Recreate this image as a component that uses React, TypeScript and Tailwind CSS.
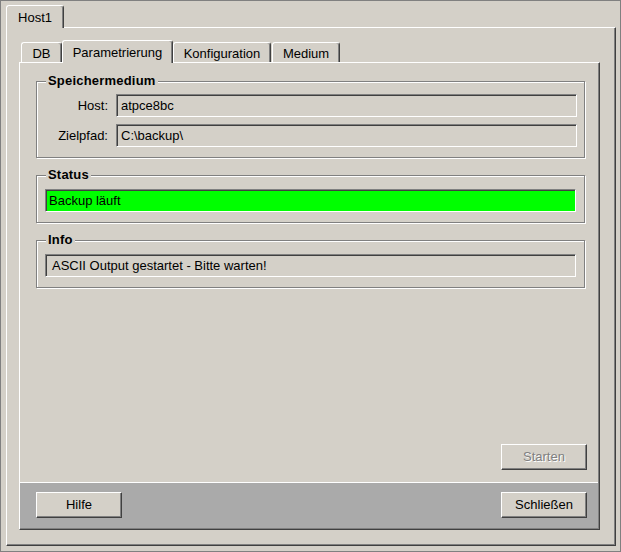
import React from 'react';

// Windows-classic style 3D edges
const raised =
  'border border-t-white border-l-white border-r-[#404040] border-b-[#404040] shadow-[inset_-1px_-1px_0_#808080]';
const sunken =
  'border border-t-[#808080] border-l-[#808080] border-r-white border-b-white shadow-[inset_1px_1px_0_#404040]';

interface TabProps {
  label: string;
  width: string;
  selected?: boolean;
}

const Tab: React.FC<TabProps> = ({ label, width, selected }) => (
  <div
    className={`${width} ${
      selected ? 'relative z-10 -mb-px h-[23px] pt-[4px]' : 'h-[20px] pt-[3px]'
    } bg-[#d4d0c8] border-l border-t border-r border-l-white border-t-white border-r-[#404040] rounded-t-[3px] shadow-[inset_-1px_0_0_#808080] text-center whitespace-nowrap`}
  >
    {label}
  </div>
);

const Group: React.FC<{ title: string; className: string; children: React.ReactNode }> = ({
  title,
  className,
  children,
}) => (
  <div
    className={`relative ml-[16px] w-[549px] border border-[#808080] shadow-[inset_1px_1px_0_#fff,1px_1px_0_#fff] ${className}`}
  >
    <span className="absolute -top-[9px] left-[9px] px-[2px] bg-[#d4d0c8] font-bold tracking-[0.2px]">
      {title}
    </span>
    {children}
  </div>
);

const Field: React.FC<{ label: string; value: string }> = ({ label, value }) => (
  <div className="flex items-center">
    <span className="w-[71px] mr-[8px] text-right">{label}</span>
    <div className={`w-[461px] h-[23px] ${sunken} bg-[#d4d0c8] pl-[4px] flex items-center`}>{value}</div>
  </div>
);

const Button: React.FC<{ label: string; disabled?: boolean }> = ({ label, disabled }) => (
  <button
    disabled={disabled}
    className={`w-[86px] h-[26px] ${raised} bg-[#d4d0c8] pb-[2px] flex items-center justify-center ${
      disabled ? 'text-[#808080] [text-shadow:1px_1px_0_#fff]' : 'text-black'
    }`}
  >
    {label}
  </button>
);

const App: React.FC = () => {
  return (
    <div className="w-[621px] h-[552px] bg-[#d4d0c8] border border-[#808080] font-['Liberation_Sans',Arial,sans-serif] text-[13px] leading-[15px] text-black pt-[4px] pl-[5px] pr-[4px] pb-[5px] flex flex-col">
      {/* Host tabs */}
      <div className="flex items-end h-[22px]">
        <Tab label="Host1" width="w-[58px]" selected />
      </div>

      <div className={`flex-1 flex flex-col ${raised} pt-[12px] pl-[12px] pr-[15px] pb-[15px]`}>
        {/* Inner tabs */}
        <div className="flex items-end h-[22px]">
          <div className="ml-[2px]">
            <Tab label="DB" width="w-[41px]" />
          </div>
          <Tab label="Parametrierung" width="w-[111px]" selected />
          <Tab label="Konfiguration" width="w-[98px]" />
          <div className="ml-[1px]">
            <Tab label="Medium" width="w-[68px]" />
          </div>
        </div>

        <div className={`flex-1 flex flex-col ${raised} pr-px pb-px`}>
          <Group title="Speichermedium" className="mt-[18px] h-[77px] pt-[12px] flex flex-col gap-[7px]">
            <Field label="Host:" value="atpce8bc" />
            <Field label="Zielpfad:" value="C:\backup\" />
          </Group>

          <Group title="Status" className="mt-[17px] h-[48px] pt-[13px]">
            <div className={`ml-[8px] w-[531px] h-[23px] ${sunken} bg-[#00ff00] pl-[3px] flex items-center`}>
              Backup läuft
            </div>
          </Group>

          <Group title="Info" className="mt-[17px] h-[48px] pt-[13px]">
            <div className={`ml-[8px] w-[531px] h-[23px] ${sunken} bg-[#d4d0c8] pl-[6px] flex items-center`}>
              ASCII Output gestartet - Bitte warten!
            </div>
          </Group>

          <div className="flex-1" />

          <div className="flex justify-end pr-[11px] mb-[12px]">
            <Button label="Starten" disabled />
          </div>

          <div className="h-[46px] border-t border-t-white bg-[#aaaaaa] flex items-start justify-between pt-[9px] pl-[16px] pr-[11px]">
            <Button label="Hilfe" />
            <Button label="Schließen" />
          </div>
        </div>
      </div>
    </div>
  );
};

export default App;
